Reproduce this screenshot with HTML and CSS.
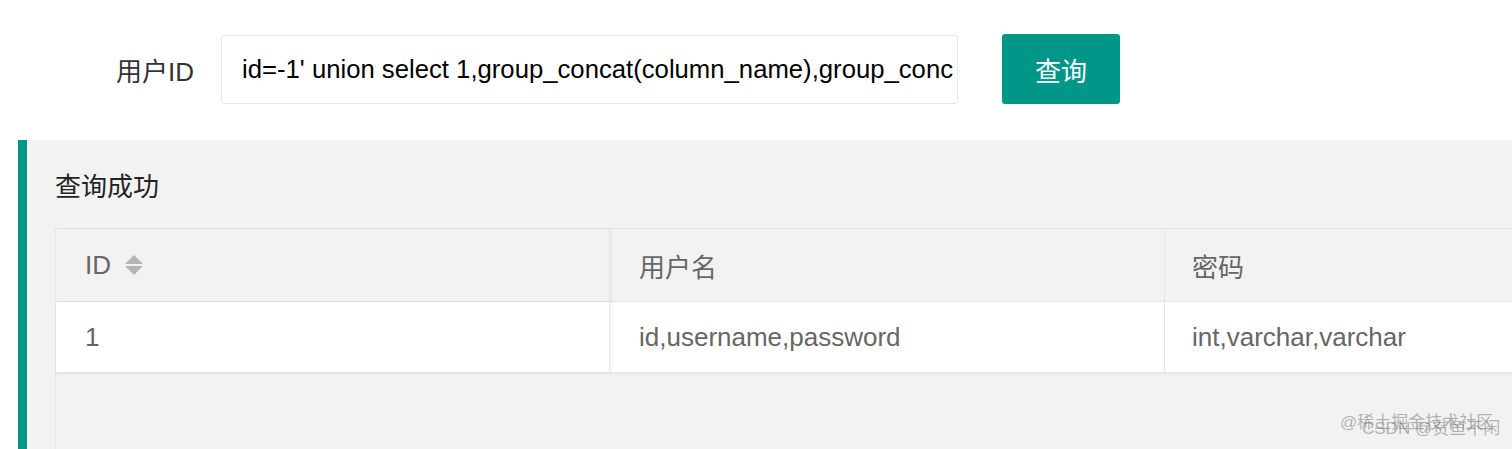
FILE: index.html
```html
<!DOCTYPE html>
<html lang="zh-CN">
<head>
<meta charset="utf-8">
<title>查询</title>
<link rel="stylesheet" href="styles.css">
</head>
<body>
<form class="search-form">
  <label class="form-label">用户ID</label>
  <div class="input-box">id=-1' union select 1,group_concat(column_name),group_conc</div>
  <button type="button" class="btn">查询</button>
</form>
<section class="quote">
  <div class="quote-title">查询成功</div>
  <div class="table-view">
    <div class="tr thead">
      <div class="cell c1">ID <span class="sort"><i class="up"></i><i class="down"></i></span></div>
      <div class="cell c2">用户名</div>
      <div class="cell c3">密码</div>
    </div>
    <div class="tr tbody">
      <div class="cell c1">1</div>
      <div class="cell c2">id,username,password</div>
      <div class="cell c3">int,varchar,varchar</div>
    </div>
  </div>
  <div class="watermark"><span class="wm1">@稀土掘金技术社区</span><span class="wm2">CSDN @贫鱼不闲</span></div>
</section>
</body>
</html>
```
FILE: styles.css
```css
html, body {
  margin: 0;
  padding: 0;
  background: #fff;
  overflow: hidden;
  height: 449px;
  font-family: "Liberation Sans", Arial, "Noto Sans CJK SC", sans-serif;
  font-size: 26px;
  color: #333;
}
.search-form {
  display: flex;
  align-items: center;
  padding-top: 34px;
  height: 70px;
}
.form-label {
  width: 221px;
  padding-right: 27px;
  box-sizing: border-box;
  text-align: right;
  color: #333;
}
.input-box {
  width: 737px;
  height: 69px;
  box-sizing: border-box;
  border: 1px solid #e6e6e6;
  border-radius: 3px;
  padding-left: 20px;
  display: flex;
  align-items: center;
  white-space: nowrap;
  overflow: hidden;
  color: #000;
  font-size: 25.7px;
}
.btn {
  margin-left: 44px;
  width: 118px;
  height: 70px;
  border: none;
  border-radius: 3px;
  background: #009688;
  color: #fff;
  font-family: inherit;
  font-size: 26px;
  padding: 0;
}
.quote {
  position: relative;
  margin: 36px 0 0 18px;
  background: #f2f2f2;
  border-left: 9px solid #009688;
  padding: 27px 0 0 28px;
  height: 309px;
  box-sizing: border-box;
  overflow: hidden;
}
.quote-title {
  line-height: 40px;
  color: #222;
}
.table-view {
  margin-top: 21px;
  border: 1px solid #e6e6e6;
  border-right: none;
  height: 260px;
  width: 1700px;
  background: #f2f2f2;
}
.tr {
  display: flex;
  color: #666;
}
.thead {
  height: 72px;
  background: #f2f2f2;
  border-bottom: 1px solid #e8e8e8;
}
.tbody {
  height: 70px;
  background: #fff;
  border-bottom: 1px solid #e6e6e6;
  box-shadow: 0 1px 2px rgba(0,0,0,0.06);
}
.cell {
  display: flex;
  align-items: center;
  box-sizing: border-box;
  padding-left: 29px;
}
.c1 {
  width: 554px;
  border-right: 1px solid #e6e6e6;
  box-shadow: 2px 0 3px rgba(0,0,0,0.05);
}
.c2 {
  width: 555px;
  padding-left: 29px;
  border-right: 1px solid #e6e6e6;
}
.c3 {
  width: 560px;
  padding-left: 27px;
}
.sort {
  display: inline-flex;
  flex-direction: column;
  gap: 2px;
  margin-left: 14px;
}
.sort i {
  display: block;
  width: 0;
  height: 0;
  border-left: 9px solid transparent;
  border-right: 9px solid transparent;
}
.sort .up {
  border-bottom: 9px solid #b5b5b5;
}
.sort .down {
  border-top: 9px solid #b5b5b5;
}
.watermark {
  position: absolute;
  left: 1313px;
  top: 268px;
  width: 180px;
  height: 30px;
  font-size: 17px;
  color: rgba(120,120,120,0.55);
  white-space: nowrap;
}
.wm1 {
  position: absolute;
  left: 0;
  top: 0;
}
.wm2 {
  position: absolute;
  left: 22px;
  top: 6px;
}
```
